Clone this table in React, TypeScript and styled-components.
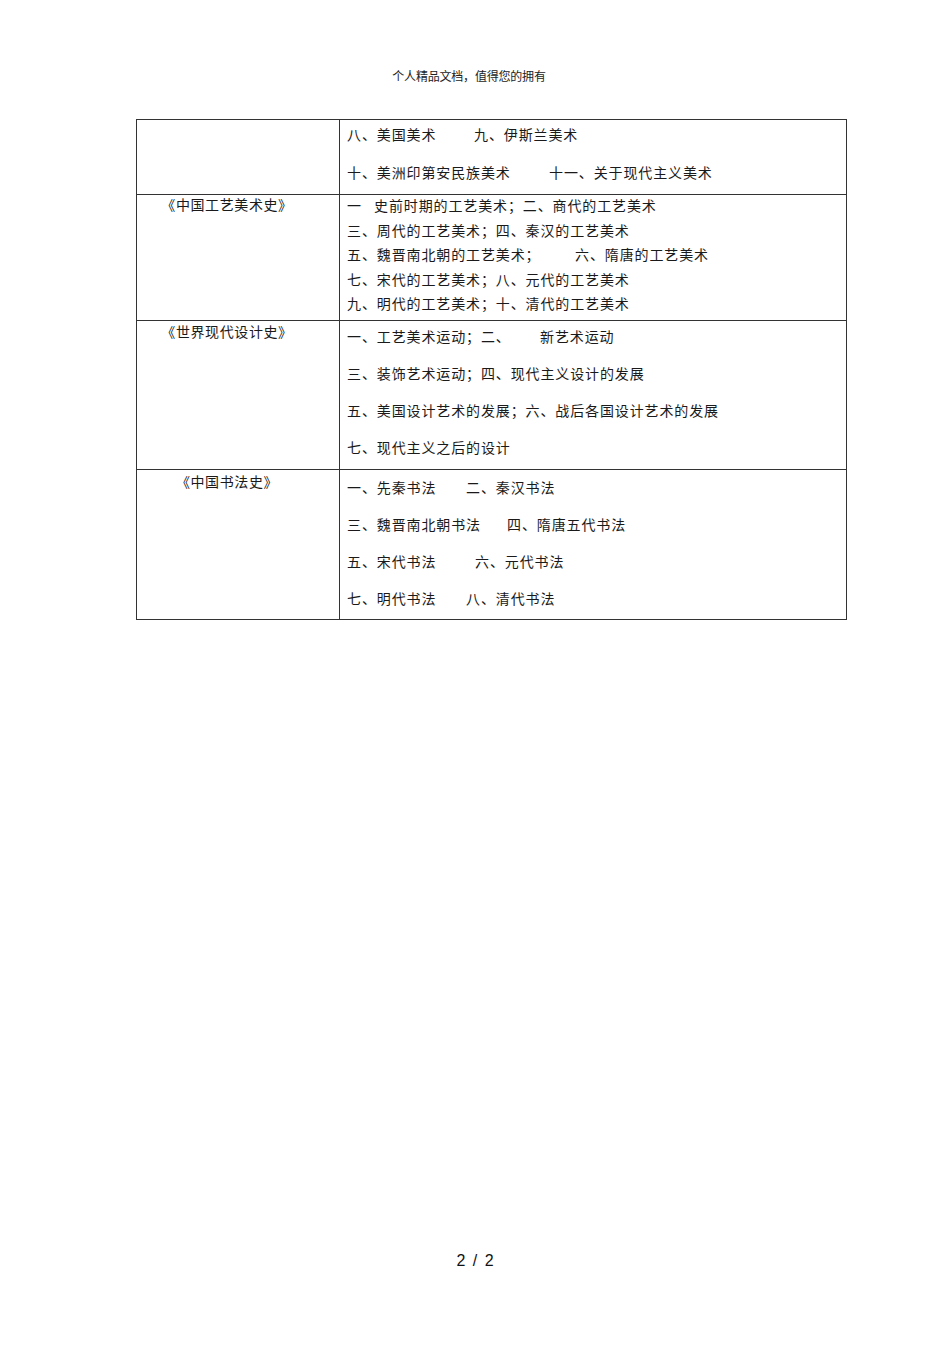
import React from 'react';
import styled, { createGlobalStyle } from 'styled-components';

const GlobalStyle = createGlobalStyle`
  html, body {
    margin: 0;
    padding: 0;
    background: #ffffff;
  }
  body {
    font-family: "Noto Sans CJK SC", "Noto Sans", sans-serif;
    color: #1a1a1a;
  }
`;

const Page = styled.div`
  width: 950px;
  height: 1345px;
  display: flex;
  flex-direction: column;
  box-sizing: border-box;
  padding-top: 68px;
  padding-bottom: 76px;
`;

const Header = styled.div`
  font-size: 12px;
  line-height: 16px;
  text-align: center;
  padding-right: 12px;
  letter-spacing: -0.2px;
  color: #222;
`;

const Table = styled.div`
  margin-top: 35px;
  margin-left: 136px;
  width: 711px;
  box-sizing: border-box;
  display: grid;
  grid-template-columns: 203px 507px;
  border-top: 1px solid #333;
  border-left: 1px solid #333;
`;

const LabelCell = styled.div<{ $pt: number }>`
  border-right: 1px solid #333;
  border-bottom: 1px solid #333;
  padding-top: ${(p) => p.$pt}px;
  padding-right: 22px;
  text-align: center;
  font-size: 14px;
  line-height: 18px;
  letter-spacing: 0.6px;
`;

const ContentCell = styled.div<{ $pt: number; $pb: number; $gap: number }>`
  border-right: 1px solid #333;
  border-bottom: 1px solid #333;
  padding: ${(p) => p.$pt}px 0 ${(p) => p.$pb}px 7px;
  display: flex;
  flex-direction: column;
  gap: ${(p) => p.$gap}px;
`;

const Line = styled.div`
  font-size: 14px;
  line-height: 18px;
  letter-spacing: 0.88px;
  white-space: nowrap;
`;

// first part of a line that ends at a tab stop
const Tab = styled.span<{ $w: number }>`
  display: inline-block;
  width: ${(p) => p.$w}px;
`;

const Footer = styled.div`
  margin-top: auto;
  font-family: "Liberation Sans", Arial, sans-serif;
  font-size: 16px;
  line-height: 16px;
  text-align: center;
  word-spacing: 3px;
  color: #111;
`;

interface Row {
  label: string;
  labelTop: number;
  pt: number;
  pb: number;
  gap: number;
  lines: [string, number | null, string][];
}

const rows: Row[] = [
  {
    label: '',
    labelTop: 1,
    pt: 5,
    pb: 13,
    gap: 20,
    lines: [
      ['八、美国美术', 127, '九、伊斯兰美术'],
      ['十、美洲印第安民族美术', 202, '十一、关于现代主义美术'],
    ],
  },
  {
    label: '《中国工艺美术史》',
    labelTop: 0,
    pt: 1,
    pb: 8,
    gap: 6.5,
    lines: [
      ['一', 27, '史前时期的工艺美术；二、商代的工艺美术'],
      ['三、周代的工艺美术；四、秦汉的工艺美术', null, ''],
      ['五、魏晋南北朝的工艺美术；', 228, '六、隋唐的工艺美术'],
      ['七、宋代的工艺美术；八、元代的工艺美术', null, ''],
      ['九、明代的工艺美术；十、清代的工艺美术', null, ''],
    ],
  },
  {
    label: '《世界现代设计史》',
    labelTop: 1,
    pt: 6,
    pb: 13,
    gap: 19,
    lines: [
      ['一、工艺美术运动；二、', 193, '新艺术运动'],
      ['三、装饰艺术运动；四、现代主义设计的发展', null, ''],
      ['五、美国设计艺术的发展；六、战后各国设计艺术的发展', null, ''],
      ['七、现代主义之后的设计', null, ''],
    ],
  },
  {
    label: '《中国书法史》',
    labelTop: 2,
    pt: 8,
    pb: 12,
    gap: 19,
    lines: [
      ['一、先秦书法', 119, '二、秦汉书法'],
      ['三、魏晋南北朝书法', 160, '四、隋唐五代书法'],
      ['五、宋代书法', 128, '六、元代书法'],
      ['七、明代书法', 119, '八、清代书法'],
    ],
  },
];

const App: React.FC = (): JSX.Element => {
  return (
    <Page>
      <GlobalStyle />
      <Header>个人精品文档，值得您的拥有</Header>
      <Table>
        {rows.map((row, i) => (
          <React.Fragment key={i}>
            <LabelCell $pt={row.labelTop}>{row.label}</LabelCell>
            <ContentCell $pt={row.pt} $pb={row.pb} $gap={row.gap}>
              {row.lines.map(([first, tab, rest], j) => (
                <Line key={j}>
                  {tab !== null ? <Tab $w={tab}>{first}</Tab> : first}
                  {rest}
                </Line>
              ))}
            </ContentCell>
          </React.Fragment>
        ))}
      </Table>
      <Footer>2 / 2</Footer>
    </Page>
  );
};

export default App;
